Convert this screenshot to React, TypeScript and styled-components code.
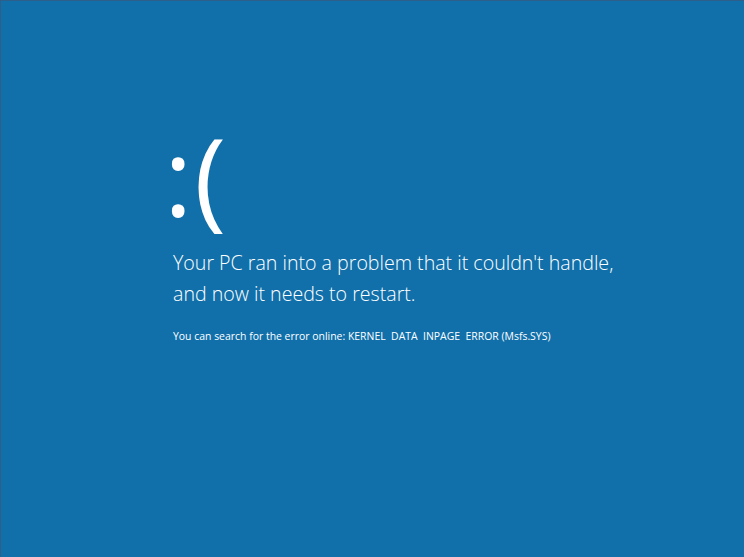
import styled, { createGlobalStyle } from 'styled-components'

const GlobalStyle = createGlobalStyle`
	html, body {
		margin: 0;
		padding: 0;
		background: #1170aa;
	}
`

const Screen = styled.div`
	box-sizing: border-box;
	width: 744px;
	height: 557px;
	background: #1170aa;
	border-top: 1px solid #2d5f8a;
	border-left: 1px solid #2d5f8a;
	color: white;
	font-family: "Open Sans", "Noto Sans", sans-serif;
	padding: 103px 0 0 163px;
	overflow: hidden;
`

const Face = styled.div`
	font-size: 108px;
	font-weight: 400;
	line-height: 143px;
	height: 143px;
	letter-spacing: 2px;
`

const Message = styled.p`
	margin: 0;
	padding-left: 9px;
	font-size: 19.6px;
	font-weight: 300;
	line-height: 31px;
`

const Detail = styled.p`
	margin: 20px 0 0;
	padding-left: 9px;
	font-size: 10.45px;
	line-height: 14px;
	font-weight: 400;
`

function App() {
	return (
		<>
			<GlobalStyle />
			<Screen>
				<Face>:(</Face>
				<Message>
					Your PC ran into a problem that it couldn't handle,<br />
					and now it needs to restart.
				</Message>
				<Detail>
					You can search for the error online: KERNEL&nbsp; DATA&nbsp; INPAGE&nbsp; ERROR (Msfs.SYS)
				</Detail>
			</Screen>
		</>
	)
}

export default App
